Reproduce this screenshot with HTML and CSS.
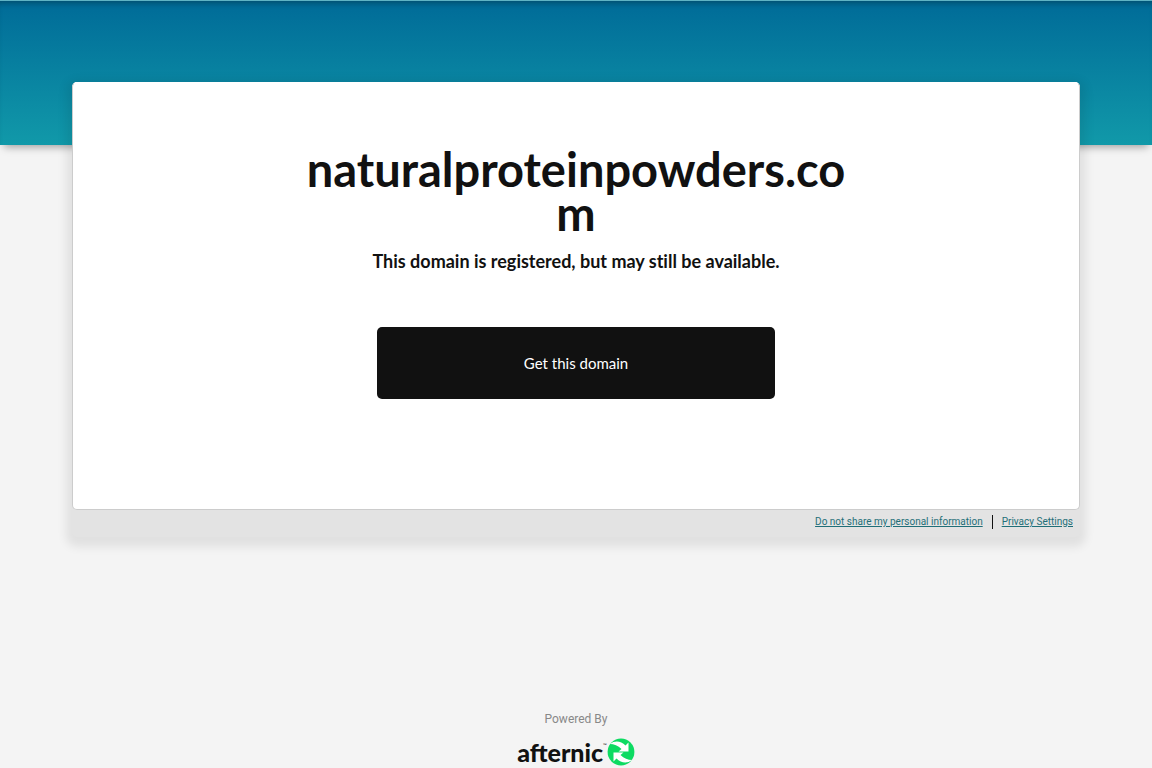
FILE: index.html
```html
<!DOCTYPE html>
<html lang="en">
<head>
    <meta charset="UTF-8">
    <meta name="viewport" content="width=device-width, initial-scale=1.0">
    <title>naturalproteinpowders.com</title>
    <link rel="stylesheet" href="styles.css">
</head>
<body>

    <header class="banner"></header>

    <main class="panel">
        <div class="card">
            <h1>naturalproteinpowders.com</h1>
            <p class="subtitle">This domain is registered, but may still be available.</p>
            <button type="button" class="get-domain">Get this domain</button>
        </div>

        <!-- Privacy links -->
        <nav class="privacy">
            <a href="#">Do not share my personal information</a>
            <a href="#">Privacy Settings</a>
        </nav>
    </main>

    <footer class="footer">
        <p>Powered By</p>
        <a href="#" class="logo">
            <span class="logo-name">afternic</span><span class="logo-tm">™</span>
            <svg class="logo-mark" viewBox="0 0 28 28" aria-hidden="true">
                <circle cx="14" cy="14" r="13.4" fill="#0ddb62"/>
                <path d="M3 6 C8 2 14 3 18.5 7.5 L21.5 4.5 V13.6 H11.5 L14.5 11 C11 7.5 7 6 3 6 Z" fill="#fff"/>
                <path d="M25 22 C20 26 14 25 9.5 20.5 L6.5 23.5 V14.4 H16.5 L13.5 17 C17 20.5 21 22 25 22 Z" fill="#fff"/>
            </svg>
        </a>
    </footer>

</body>
</html>
```
FILE: styles.css
```css
* {
    box-sizing: border-box;
}

body {
    display: flex;
    flex-direction: column;
    min-height: 100vh;
    margin: 0;
    background-color: #f4f4f4;
    color: #111;
    font-family: Lato, sans-serif;
}

.banner {
    height: 145px;
    border-top: 1px solid #5fb3c4;
    background: linear-gradient(#006b98, #1199a9);
    box-shadow: 0 6px 8px -4px rgba(0, 0, 0, 0.35), inset 0 6px 6px -4px rgba(0, 0, 0, 0.3);
}

.panel {
    margin: -63px 72px 0;
    border-radius: 5px;
    background-color: #e3e3e3;
    box-shadow: 0 4px 10px 6px rgba(0, 0, 0, 0.08);
    z-index: 1;
}

.card {
    display: flex;
    flex-direction: column;
    align-items: center;
    padding: 64px 24px 110px;
    border: 1px solid #ccc;
    border-top-color: #fff;
    border-radius: 5px;
    background-color: #fff;
    text-align: center;
}

h1 {
    max-width: 560px;
    margin: 0;
    font-size: 47px;
    line-height: 44px;
    font-weight: 700;
    overflow-wrap: anywhere;
}

.subtitle {
    margin: 14px 0 54px;
    font-size: 18px;
    line-height: 24px;
    font-weight: 700;
    font-variant-ligatures: none;
}

.get-domain {
    width: 100%;
    max-width: 398px;
    padding: 24px;
    border: none;
    border-radius: 5px;
    background-color: #111;
    color: #fff;
    font-family: inherit;
    font-size: 15px;
    line-height: 24px;
    cursor: pointer;
}

.privacy {
    display: flex;
    justify-content: flex-end;
    padding: 5px 7px 8px;
    font-size: 10px;
    line-height: 14px;
    font-family: Roboto, sans-serif;
}

.privacy a {
    color: #1f6f78;
}

.privacy a + a {
    margin-left: 9px;
    padding-left: 9px;
    border-left: 1px solid #111;
}

.footer {
    margin-top: auto;
    text-align: center;
}

.footer p {
    margin: 0 0 11px;
    color: #888;
    font-family: Roboto, sans-serif;
    font-size: 12px;
    line-height: 16px;
}

.logo {
    display: flex;
    justify-content: center;
    height: 30px;
    color: #111;
    text-decoration: none;
}

.logo-name {
    font-size: 25px;
    line-height: 28px;
    font-weight: 900;
}

.logo-tm {
    font-size: 5px;
    line-height: 14px;
}

.logo-mark {
    width: 28px;
    height: 28px;
}
```
